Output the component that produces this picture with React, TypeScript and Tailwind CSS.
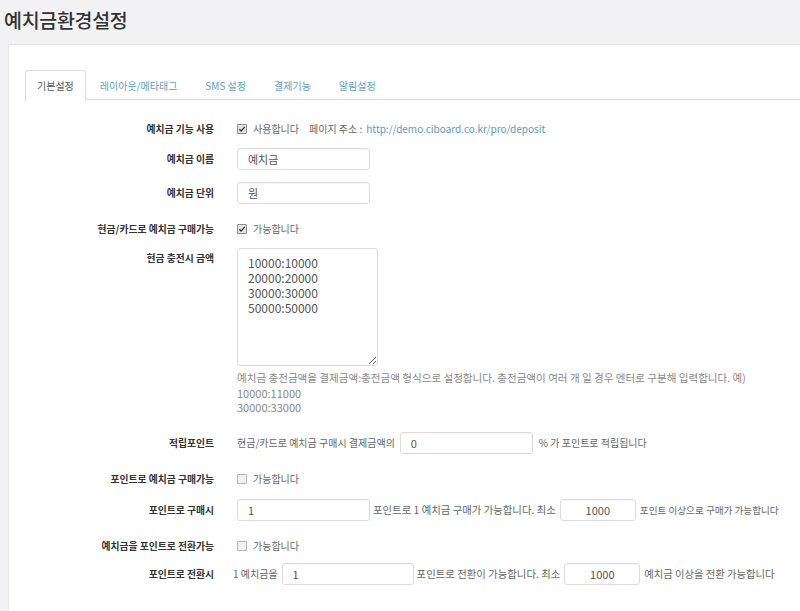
import React from "react";

const font = { fontFamily: '"Noto Sans CJK KR", "Noto Sans", sans-serif' };

const Check = ({ checked }: { checked?: boolean }) => (
    <span
        className={
            "inline-flex h-[10px] w-[10px] shrink-0 items-center justify-center rounded-[1px] border " +
            (checked ? "border-[#8c8c8c] bg-[#e4e4e4]" : "border-[#b5b5b5] bg-[#f1f1f1]")
        }
    >
        {checked && (
            <svg viewBox="0 0 10 10" className="h-[8px] w-[8px]">
                <path d="M1.6 5.2 L4 7.6 L8.4 2.4" fill="none" stroke="#333" strokeWidth="1.7" />
            </svg>
        )}
    </span>
);

const Row = ({
    label,
    className = "",
    top = false,
    children,
}: {
    label: string;
    className?: string;
    top?: boolean;
    children: React.ReactNode;
}) => (
    <div className={"flex " + (top ? "items-start " : "items-center ") + className}>
        <div
            className={
                "w-[189px] shrink-0 text-right text-[9.8px] font-bold text-[#333] " + (top ? "pt-[3px]" : "")
            }
        >
            {label}
        </div>
        <div className="ml-[23px] flex items-center text-[#666]">{children}</div>
    </div>
);

const inputCls =
    "h-[22px] rounded-[3px] border border-[#dcdcdc] bg-white px-[10px] text-[11px] text-[#555] shadow-[inset_0_1px_1px_rgba(0,0,0,0.04)] outline-none";

const tabs = ["기본설정", "레이아웃/메타태그", "SMS 설정", "결제기능", "알림설정"];

export default function App() {
    return (
        <div className="h-[611px] w-[800px] overflow-hidden bg-[#f2f2f4] text-[10px] leading-[14px]" style={font}>
            {/* Page title */}
            <div className="flex h-[44px] items-center pl-[4px] pb-[4px]">
                <h1 className="text-[19.5px] font-medium tracking-[-0.3px] text-[#333]">예치금환경설정</h1>
            </div>

            {/* Panel */}
            <div className="ml-[8px] h-[567px] border-l border-t border-[#e4e4e6] bg-white pl-[16px] pt-[25px]">
                <ul className="flex h-[30px] border-b border-[#dddddd]">
                    {tabs.map((t, i) => (
                        <li
                            key={t}
                            className={
                                "mb-[-1px] flex h-[31px] items-center px-[11px] " +
                                (i === 0
                                    ? "rounded-t-[3px] border border-b-0 border-[#dddddd] bg-white text-[#555]"
                                    : "mx-[2px] px-[12px] text-[#5f9dca]")
                            }
                        >
                            {t}
                        </li>
                    ))}
                </ul>

                <Row label="예치금 기능 사용" className="mt-[18px] h-[22px]">
                    <Check checked />
                    <span className="ml-[6px]">사용합니다</span>
                    <span className="ml-[10px]">페이지 주소 :</span>
                    <span className="ml-[4px] text-[#5b9ac8]">http://demo.ciboard.co.kr/pro/deposit</span>
                </Row>

                <Row label="예치금 이름" className="mt-[8px]">
                    <input className={inputCls + " w-[133px]"} style={font} defaultValue="예치금" />
                </Row>

                <Row label="예치금 단위" className="mt-[12px]">
                    <input className={inputCls + " w-[133px]"} style={font} defaultValue="원" />
                </Row>

                <Row label="현금/카드로 예치금 구매가능" className="mt-[14px] h-[22px]">
                    <Check checked />
                    <span className="ml-[6px]">가능합니다</span>
                </Row>

                <Row label="현금 충전시 금액" className="mt-[8px]" top>
                    <div className="flex flex-col">
                        <textarea
                            className="h-[118px] w-[141px] resize-y rounded-[3px] border border-[#dcdcdc] px-[10px] pt-[6px] text-[12px] leading-[15px] text-[#555] outline-none"
                            style={font}
                            defaultValue={"10000:10000\n20000:20000\n30000:30000\n50000:50000"}
                        />
                        <div className="mt-[5px] leading-[14.5px] text-[#888]">
                            <div className="whitespace-nowrap text-[10.55px]">
                                예치금 충전금액을 결제금액:충전금액 형식으로 설정합니다. 충전금액이 여러 개 일 경우 엔터로 구분해 입력합니다. 예)
                            </div>
                            <div className="text-[11px]">10000:11000</div>
                            <div className="text-[11px]">30000:33000</div>
                        </div>
                    </div>
                </Row>

                <Row label="적립포인트" className="mt-[17px]">
                    <span className="whitespace-nowrap">현금/카드로 예치금 구매시 결제금액의</span>
                    <input className={inputCls + " ml-[5px] w-[133px]"} style={font} defaultValue="0" />
                    <span className="ml-[6px] whitespace-nowrap">% 가 포인트로 적립됩니다</span>
                </Row>

                <Row label="포인트로 예치금 구매가능" className="mt-[14px] h-[22px]">
                    <Check />
                    <span className="ml-[6px]">가능합니다</span>
                </Row>

                <Row label="포인트로 구매시" className="mt-[9px]">
                    <input className={inputCls + " w-[133px]"} style={font} defaultValue="1" />
                    <span className="ml-[3px] whitespace-nowrap text-[10.4px]">포인트로 1 예치금 구매가 가능합니다. 최소</span>
                    <input className={inputCls + " ml-[4px] w-[76px] text-center"} style={font} defaultValue="1000" />
                    <span className="ml-[4px] whitespace-nowrap text-[9.6px]">포인트 이상으로 구매가 가능합니다</span>
                </Row>

                <Row label="예치금을 포인트로 전환가능" className="mt-[14px] h-[22px]">
                    <Check />
                    <span className="ml-[6px]">가능합니다</span>
                </Row>

                <Row label="포인트로 전환시" className="mt-[6px]">
                    <span className="-ml-[4px] whitespace-nowrap">1 예치금을</span>
                    <input className={inputCls + " ml-[4px] w-[132px]"} style={font} defaultValue="1" />
                    <span className="ml-[3px] whitespace-nowrap text-[10.4px]">포인트로 전환이 가능합니다. 최소</span>
                    <input className={inputCls + " ml-[4px] w-[76px] text-center"} style={font} defaultValue="1000" />
                    <span className="ml-[4px] whitespace-nowrap text-[10.3px]">예치금 이상을 전환 가능합니다</span>
                </Row>
            </div>
        </div>
    );
}
